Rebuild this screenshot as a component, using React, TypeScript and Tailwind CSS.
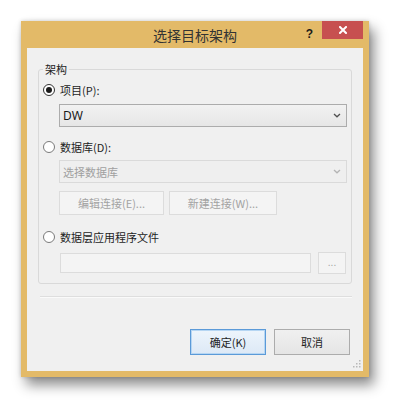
import React from "react";

const Chevron = ({ color }: { color: string }) => (
  <svg width="8" height="5" viewBox="0 0 8 5">
    <path d="M1 1 L4 3.8 L7 1" fill="none" stroke={color} strokeWidth="1.3" />
  </svg>
);

const Radio = ({ checked, label }: { checked?: boolean; label: string }) => (
  <div className="flex items-center h-[16px] gap-[5px]">
    <div
      className={
        checked
          ? "w-[12px] h-[12px] rounded-full border border-[#333333] bg-white flex items-center justify-center"
          : "w-[12px] h-[12px] rounded-full border border-[#7a7a7a] bg-white"
      }
    >
      {checked && <div className="w-[6px] h-[6px] rounded-full bg-[#1a1a1a]" />}
    </div>
    <span className="text-[11px] leading-[14px] text-[#1e1e1e]">{label}</span>
  </div>
);

export default function App() {
  return (
    <div
      className="w-[411px] h-[420px] bg-white pt-[21px] pl-[21px]"
      style={{ fontFamily: '"Noto Sans CJK SC", "Noto Sans", sans-serif' }}
    >
      <div className="w-[348px] h-[356px] bg-[#e3ba68] flex flex-col shadow-[5px_8px_12px_rgba(0,0,0,0.45),0_0_4px_rgba(0,0,0,0.18)]">
        {/* title bar */}
        <div className="h-[27px] grid grid-cols-[1fr_auto_1fr]">
          <div />
          <div className="flex items-center text-[14px] leading-[18px] text-[#333333] pt-[1px]">选择目标架构</div>
          <div className="flex justify-end items-start">
            <span className="mt-[6px] mr-[9px] text-[12px] font-bold leading-[14px] text-[#1a1a1a]" style={{ fontFamily: '"Liberation Sans", sans-serif' }}>?</span>
            <div className="w-[41px] h-[18px] bg-[#c75050] mr-[6px] flex items-center justify-center">
              <svg width="8" height="8" viewBox="0 0 8 8">
                <path d="M1 1 L7 7 M7 1 L1 7" stroke="#ffffff" strokeWidth="2" strokeLinecap="square" />
              </svg>
            </div>
          </div>
        </div>
        {/* content */}
        <div className="flex-1 mx-[6px] mb-[6px] bg-[#f0f0f0] flex flex-col">
          <fieldset className="mx-[11px] mt-[14px] border border-[#d9d9d9] rounded-[3px] px-[4px] pt-[6px] pb-[9px] min-w-0">
            <legend className="px-[2px] text-[11px] leading-[14px] text-[#1e1e1e]">架构</legend>
            <Radio checked label="项目(P):" />
            <div className="mt-[6px] ml-[16px] h-[23px] border border-[#acacac] bg-gradient-to-b from-[#f2f2f2] to-[#e6e6e6] flex items-center justify-between pl-[3px] pr-[5px]">
              <span className="text-[12px] leading-[14px] text-[#1a1a1a]" style={{ fontFamily: '"Noto Sans", sans-serif' }}>DW</span>
              <Chevron color="#505050" />
            </div>
            <div className="mt-[12px]">
              <Radio label="数据库(D):" />
            </div>
            <div className="mt-[5px] ml-[16px] h-[23px] border border-[#dadada] bg-[#efefef] flex items-center justify-between pl-[3px] pr-[5px]">
              <span className="text-[11px] leading-[14px] text-[#a0a0a0]">选择数据库</span>
              <Chevron color="#b4b4b4" />
            </div>
            <div className="mt-[8px] ml-[16px] flex gap-[5px]">
              <div className="w-[105px] h-[24px] border border-[#dcdcdc] bg-[#f4f4f4] flex items-center justify-center text-[11px] text-[#a3a3a3]">编辑连接(E)...</div>
              <div className="w-[108px] h-[24px] border border-[#dcdcdc] bg-[#f4f4f4] flex items-center justify-center text-[11px] text-[#a3a3a3]">新建连接(W)...</div>
            </div>
            <div className="mt-[14px]">
              <Radio label="数据层应用程序文件" />
            </div>
            <div className="mt-[7px] ml-[17px] flex items-center gap-[7px]">
              <div className="w-[251px] h-[20px] border border-[#dcdcdc] bg-[#f4f4f4]" />
              <div className="w-[28px] h-[22px] border border-[#dcdcdc] bg-[#f4f4f4] flex items-center justify-center text-[10px] leading-[10px] text-[#a3a3a3]" style={{ fontFamily: '"Liberation Sans", sans-serif' }}>...</div>
            </div>
          </fieldset>
          <div className="mt-[12px] ml-[13px] mr-[11px] border-t border-[#dedede] border-b border-b-[#fafafa]" />
          <div className="mt-[31px] flex justify-end gap-[8px] pr-[13px]">
            <div className="w-[76px] h-[26px] border border-[#5b9ad8] bg-gradient-to-b from-[#edf5fc] to-[#dde9f6] flex items-center justify-center text-[11px] text-[#1e1e1e] shadow-[inset_0_0_0_1px_#b6d6f3]">确定(K)</div>
            <div className="w-[76px] h-[26px] border border-[#acacac] bg-gradient-to-b from-[#f0f0f0] to-[#e5e5e5] flex items-center justify-center text-[11px] text-[#1e1e1e]">取消</div>
          </div>
          <div className="flex-1 flex justify-end items-end pr-[2px] pb-[3px]">
            <svg width="8" height="8" viewBox="0 0 8 8">
              <rect x="6" y="0" width="1.5" height="1.5" fill="#b8b8b8" />
              <rect x="3" y="3" width="1.5" height="1.5" fill="#b8b8b8" />
              <rect x="6" y="3" width="1.5" height="1.5" fill="#b8b8b8" />
              <rect x="0" y="6" width="1.5" height="1.5" fill="#b8b8b8" />
              <rect x="3" y="6" width="1.5" height="1.5" fill="#b8b8b8" />
              <rect x="6" y="6" width="1.5" height="1.5" fill="#b8b8b8" />
            </svg>
          </div>
        </div>
      </div>
    </div>
  );
}
